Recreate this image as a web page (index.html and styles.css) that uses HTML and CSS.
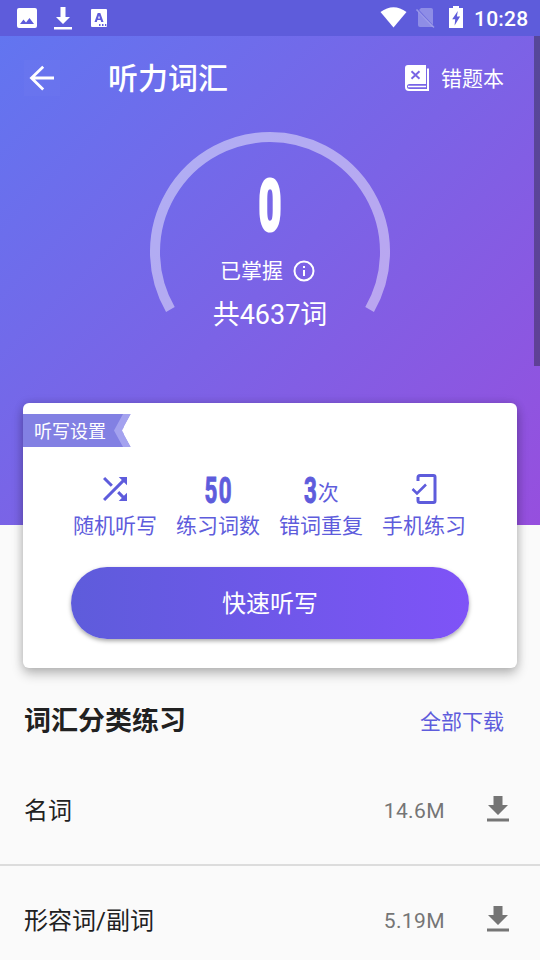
FILE: index.html
```html
<!DOCTYPE html>
<html lang="zh-CN">
<head>
<meta charset="utf-8">
<title>听力词汇</title>
<link rel="stylesheet" href="styles.css">
</head>
<body>
<header class="status">
  <svg class="status-left" width="92" height="36" viewBox="0 0 92 36" fill="#fff">
    <path fill-rule="evenodd" d="M2 8h16a2 2 0 0 1 2 2v16a2 2 0 0 1-2 2H2a2 2 0 0 1-2-2V10a2 2 0 0 1 2-2zM3 24h14l-4.500-6-3.500 4.500-2.500-3z"/>
    <path d="M43.500 7h5v10h4.500l-7 7-7-7h4.500zM37 27h18v2.500H37z"/>
    <path fill-rule="evenodd" d="M75 9h14q1 0 1 1v16q0 1-1 1H75q-1 0-1-1V10q0-1 1-1zM80.700 13l-3.200 9h2.300l.6-2h3.200l.6 2h2.300l-3.200-9zM82 15.500l1 3h-2zM82 24v2h1.500v-2zM85 24v2h1.500v-2zM88 24v2h1.300v-2z"/>
  </svg>
  <div class="status-right">
    <svg width="84" height="36" viewBox="380 0 84 36" fill="#fff">
      <path d="M380.500 12Q393.500 2.500 406.500 12L393.500 27.500z"/>
      <path opacity=".3" d="M421 8h10q2 0 2 2v15L419 10zM418 12l15 15h-13q-2 0-2-2z"/>
      <path d="M416.500 9.500l17.500 18" stroke="#fff" stroke-width="1.600" opacity=".35"/>
      <path fill-rule="evenodd" d="M453 6h6v2h4v20h-14V8h4zM457.800 11l-5.600 8.200h3l-.6 6.300 5.500-9h-3.200z"/>
    </svg>
    <span class="clock">10:28</span>
  </div>
</header>

<main>
  <section class="hero">
    <nav class="toolbar">
      <svg class="back" width="36" height="36" viewBox="0 0 36 36" fill="none" stroke="#fff" stroke-width="2.800"><path d="M30 18H8M19.200 6.800L7.500 18l11.700 11.500"/></svg>
      <h1>听力词汇</h1>
      <a class="mistakes">
        <svg width="24" height="28" viewBox="0 0 24 28">
          <path fill="#fff" d="M3 1h18v19H4.500a1.700 1.700 0 0 0 0 5H22V4.500h2V27H4q-4 0-4-4V4q0-3 3-3z"/>
          <path d="M6.500 7.200l8 7.500m0-7.500l-8 7.500" stroke="#7864e4" stroke-width="1.900"/>
          <path d="M3 22.500h18" stroke="#fff" stroke-width="1.500"/>
        </svg>
        <span>错题本</span>
      </a>
    </nav>
    <div class="gauge">
      <svg class="arc" width="240" height="184" viewBox="0 0 240 184" fill="none"><path d="M20.400 177.500A115 115 0 1 1 219.600 177.500" stroke="#fff" stroke-opacity=".45" stroke-width="10"/></svg>
      <div class="score"><span>0</span></div>
      <div class="mastered">已掌握
        <svg width="22" height="22" viewBox="0 0 22 22" fill="none" stroke="#fff" stroke-width="2"><circle cx="11" cy="11" r="9.500"/><path d="M11 10v6M11 6v2"/></svg>
      </div>
      <div class="total">共4637词</div>
    </div>
    <div class="scrollbar"></div>
  </section>

  <section class="card">
    <div class="ribbon">
      <span>听写设置</span>
      <svg width="17" height="33" viewBox="0 0 17 33"><path fill="#8280e3" d="M0 0h10v33H0z"/><path fill="#a4a2ef" d="M9 0h8L8 16.500 17 33H9L0 16.500z"/><path fill="#fff" d="M17 0v33L8 16.500z"/></svg>
    </div>
    <div class="options">
      <div class="option">
        <div class="value icon"><svg width="36" height="36" viewBox="0 0 24 24" fill="#5e5cdc"><path d="M10.590 9.170L5.410 4 4 5.410l5.170 5.170 1.420-1.410zM14.500 4l2.040 2.040L4 18.590 5.410 20 17.960 7.460 20 9.500V4h-5.500zm.33 9.410l-1.410 1.410 3.130 3.130L14.500 20H20v-5.500l-2.040 2.040-3.130-3.130z"/></svg></div>
        <div class="label">随机听写</div>
      </div>
      <div class="option"><div class="value"><span class="num two">50</span></div><div class="label">练习词数</div></div>
      <div class="option"><div class="value"><span class="num one">3</span><span class="unit">次</span></div><div class="label">错词重复</div></div>
      <div class="option">
        <div class="value icon"><svg width="26" height="32" viewBox="0 0 26 32" fill="none" stroke="#5e5cdc"><path stroke-width="3" d="M7 8V4.500q0-2 2-2h13.500q1.500 0 1.500 1.500v24q0 1.500-1.500 1.500H9q-2 0-2-2V24"/><path stroke-width="2.500" d="M1.500 16l4.500 4.500 9-9"/></svg></div>
        <div class="label">手机练习</div>
      </div>
    </div>
    <button class="start">快速听写</button>
  </section>

  <section class="list">
    <div class="list-head"><h2>词汇分类练习</h2><a>全部下载</a></div>
    <div class="row">
      <span class="name">名词</span><span class="size">14.6M</span>
      <svg width="22" height="28" viewBox="0 0 22 28" fill="#757575"><path d="M6.500 1h9v9H21L11 20 1 10h5.500zM0 23.500h22v3H0z"/></svg>
    </div>
    <div class="row">
      <span class="name">形容词/副词</span><span class="size">5.19M</span>
      <svg width="22" height="28" viewBox="0 0 22 28" fill="#757575"><path d="M6.500 1h9v9H21L11 20 1 10h5.500zM0 23.500h22v3H0z"/></svg>
    </div>
  </section>
</main>
</body>
</html>
```

FILE: styles.css
```css
* { box-sizing: border-box; margin: 0; padding: 0; }
body {
  width: 540px;
  height: 960px;
  overflow: hidden;
  background: #fafafa;
  color: #212121;
  font-family: Roboto, "Noto Sans CJK SC", sans-serif;
}
svg { display: block; flex: none; }

.status {
  display: flex;
  justify-content: space-between;
  height: 36px;
  padding: 0 12px 0 17px;
  background: #5e5cdb;
  color: #fff;
}
.status-right { display: flex; gap: 10px; }
.clock { font-size: 21px; font-weight: 500; line-height: 38px; width: 54px; white-space: nowrap; letter-spacing: .2px; }

.hero {
  position: relative;
  height: 489px;
  background: linear-gradient(135deg, #6275f0 0%, #7b63e6 50%, #964fde 100%);
  color: #fff;
}
.toolbar { display: flex; align-items: center; height: 84px; padding: 0 36px 0 24px; }
.back { background: rgba(255, 255, 255, .02); }
h1 { margin-left: 48px; padding-top: 2px; font-size: 30px; font-weight: 500; line-height: 40px; }
.mistakes { display: flex; align-items: center; gap: 12px; margin-left: auto; font-size: 21px; }
.mistakes span { padding-top: 2px; line-height: 28px; }
.gauge { position: relative; width: 240px; height: 220px; margin: 12px auto 0; padding-top: 40px; text-align: center; }
.arc { position: absolute; top: 0; left: 0; }
.score { height: 66px; font-size: 70px; font-weight: 700; line-height: 68px; }
.score span { display: inline-block; transform: scaleX(.56); -webkit-text-stroke: 4px #fff; }
.mastered {
  display: flex;
  justify-content: center;
  align-items: center;
  gap: 10px;
  height: 34px;
  margin: 16px 5px 0 0;
  font-size: 21px;
  line-height: 32px;
}
.total { height: 40px; margin-top: 7px; font-size: 27px; line-height: 40px; }
.scrollbar { position: absolute; top: 0; right: 0; width: 6px; height: 330px; background: rgba(40, 40, 60, .45); }

.card {
  position: relative;
  height: 265px;
  margin: -122px 23px 0;
  padding-top: 11px;
  border-radius: 6px;
  background: #fff;
  box-shadow: 0 6px 12px rgba(0, 0, 0, .24), 0 0 10px rgba(0, 0, 0, .14);
}
.ribbon { display: flex; height: 33px; color: #fff; font-size: 18px; line-height: 36px; }
.ribbon span { width: 91px; height: 33px; padding-left: 11px; background: #8280e3; white-space: nowrap; }
.options { display: grid; grid-template-columns: repeat(4, 103px); margin: 22px 0 0 40.5px; color: #5e5cdc; text-align: center; }
.value { display: flex; justify-content: center; align-items: center; height: 40px; }
.num { display: inline-block; padding-top: 3px; font-size: 36px; font-weight: 700; line-height: 40px; transform: scaleX(.62); -webkit-text-stroke: 1px #5e5cdc; }
.two { margin-left: 2px; letter-spacing: 2px; }
.one { margin: 0 -3px 0 -3px; }
.unit { padding-top: 8px; font-size: 21px; line-height: 34px; }
.label { height: 34px; font-size: 21px; line-height: 35px; }
.start {
  display: block;
  width: 398px;
  height: 72px;
  margin: 24px auto 0;
  border: 0;
  border-radius: 36px;
  background: linear-gradient(90deg, #5e5cdb, #7f53f7);
  box-shadow: 0 2px 4px rgba(0, 0, 0, .35);
  color: #fff;
  font: 24px/72px Roboto, "Noto Sans CJK SC", sans-serif;
  padding-top: 1px;
}

.list { padding-top: 40px; }
.list-head { display: flex; justify-content: space-between; height: 46px; padding: 0 36px 0 24px; }
h2 { height: 30px; overflow: hidden; font-size: 27px; font-weight: 700; line-height: 26px; }
.list-head a { color: #5e5cdc; font-size: 21px; line-height: 28px; }
.row { display: flex; align-items: center; height: 110px; padding: 0 31px 0 24px; }
.row + .row { padding-bottom: 2px; border-top: 2px solid #dcdcdc; }
.name { padding-bottom: 2px; font-size: 24px; }
.size { padding-top: 3px; margin-left: auto; margin-right: 42px; color: #757575; font-size: 21px; letter-spacing: .4px; }
```
